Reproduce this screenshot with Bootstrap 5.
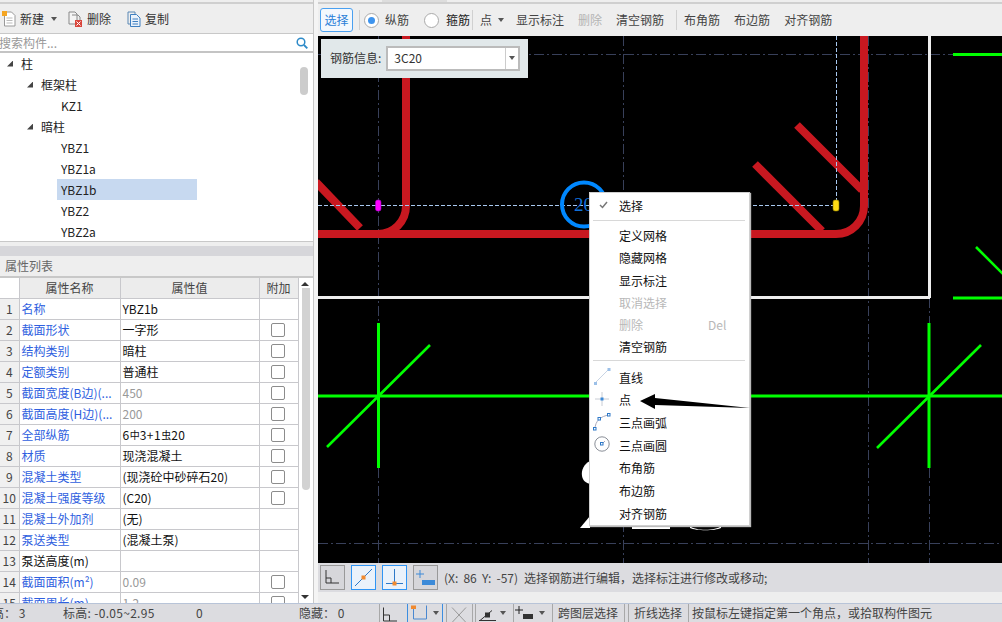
<!DOCTYPE html>
<html lang="zh">
<head>
<meta charset="utf-8">
<title>钢筋编辑</title>
<link href="https://cdn.jsdelivr.net/npm/bootstrap@5.3.0/dist/css/bootstrap.min.css" rel="stylesheet">
<style>
html,body{height:622px;overflow:hidden}
body{font-family:"Noto Sans CJK SC","Liberation Sans",sans-serif;font-size:12px;line-height:1;color:#222;background:#eee;position:relative;width:1002px}
.app-top{height:603px}
.side{width:318px;flex:none;background:#f4f4f4}
.side-in{width:314px;border-right:1px solid #c8c8c8;height:603px;background:#eee}
.strip{height:4px;border-bottom:2px solid #cfcfcf;background:#eee}
.tabmark{display:block;height:2px;width:65px;margin-left:64px;background:#ddd}
.ltool{height:30px;padding-left:2px;border-bottom:1px solid #c8c8c8;color:#333}
.ltool svg{flex:none}
.search-row{height:19px;background:#fff;border-bottom:2px solid #c4c4c4;color:#999;margin-left:0}
.search-txt{margin-left:-1px}
.tree{height:189px;background:#fff;border-bottom:1px solid #c8c8c8;position:relative;overflow:hidden}
.tree-row{height:21px;display:flex;align-items:center;color:#222}
.tree-row.sel{background:#c7d9f0;width:140px;margin-left:57px;padding-left:4px!important}
.lv1{padding-left:7px}.lv2{padding-left:27px}.lv3{padding-left:61px}
.tri{width:6px;height:6px;margin-right:8px;flex:none;background:#444;clip-path:polygon(100% 0,100% 100%,0 100%)}
.thumb-a{position:absolute;left:300px;top:14px;width:8px;height:28px;border-radius:4px;background:#ccc}
.g1{height:4px;background:#eee}
.g2{height:10px;background:#d6d6da}
.prop-head{height:22px;padding-left:5px;border-bottom:2px solid #c8c8c8;color:#666;background:#eee;font-size:12px}
.prop-wrap{height:325px;overflow:hidden;background:#fff;position:relative}
.ptab{width:298px;table-layout:fixed;border-collapse:collapse;margin:0;--bs-table-bg:transparent}
.ptab td,.ptab th{padding:0 0 0 2px;height:21px;border:1px solid #c8c8cc;font-weight:400;font-size:12px;white-space:nowrap;overflow:hidden;vertical-align:middle;color:#111}
.ptab tr:first-child th{height:20px;background:#ececec;text-align:center;padding:0;border-top:0;color:#444}
.ptab tr:first-child th:first-child{background:#fff;border:0;border-bottom:1px solid #c8c8cc}
.ptab .num{background:#f0f0f0;padding:0;text-align:center;color:#444;border-left:0;font-size:12px}
.ptab .nm{color:#2f5fe0}
.ptab .gry{color:#999}
.steel{letter-spacing:.5px}
.steel span{font-size:10px;position:relative;top:-1px;letter-spacing:0}
.tick{display:block;width:14px;height:14px;border:1px solid #8c8c8c;border-radius:2px;background:#fff;margin:0 0 0 11px}
.ptab .ck{padding:0}
.sb{position:absolute;left:299px;top:0;bottom:0;width:14px;background:#fff}
.sb-up,.sb-dn{position:absolute;left:2px;width:0;height:0;border-left:4px solid transparent;border-right:4px solid transparent}
.sb-up{top:4px;border-bottom:4px solid #333}
.sb-dn{top:317px;border-top:4px solid #333}
.sb-th{position:absolute;left:3px;top:10px;width:8px;height:202px;background:#d2d2d2;border-radius:0 0 4px 4px}
.main{flex:1;min-width:0;height:603px;background:#eee}
.rtool{height:32px;padding-left:2px;color:#444;background:#eee}
.btn-sel{width:33px;height:24px;border:1px solid #4aa0f0;border-radius:3px;background:#f4f8fd;color:#2a7fd8;padding:0;font-size:12px;margin-right:6px}
.vsep{width:1px;height:20px;background:#d0d0d0;flex:none}
.radio-dot{width:15px;height:15px;border-radius:50%;border:1px solid #aaa;background:#fff;flex:none;display:flex;align-items:center;justify-content:center}
.radio-dot i{display:block;width:7px;height:7px;border-radius:50%;background:#3e94ee}
.caret-d{width:0;height:0;border-left:3.5px solid transparent;border-right:3.5px solid transparent;border-top:4px solid #555;flex:none}
.dis{color:#b4b4b4}
.cv-wrap{height:527px;position:relative;background:#000;overflow:hidden}
.cv-wrap>svg{display:block}
.info-box{position:absolute;left:3px;top:3px;width:207px;height:39px;background:#e1e8ea;padding:0 0 1px 9px;color:#333}
.info-in{width:134px;height:25px;border:2px solid #bbb;background:#fff;margin-left:5px;padding-left:6px;position:relative}
.info-dd{position:absolute;right:0;top:0;bottom:0;width:13px;border-left:1px solid #ccc;background:#fff;display:flex;align-items:center;justify-content:center}
.bbar{height:29px;background:#dcdce0;padding-left:2px;color:#444}
.ib{width:25px;height:25px;border:1px solid #999;background:#d6d6da;flex:none;margin-right:6px;display:flex;align-items:center;justify-content:center}
.ib.on{border:1px solid #2f95f5;background:#eaf2fb}
.coord{word-spacing:2.5px;margin-right:6px}
.bspace{height:11px;background:#eee}
.status{height:19px;background:#dcdce0;border-top:1px solid #b8c4d8;color:#444;position:relative;white-space:nowrap}
.sl{position:absolute;top:0;height:18px;display:flex;align-items:center}
.wide{letter-spacing:.3px}
.ssep{position:absolute;top:0;width:1px;height:18px;background:#a8a8a8}
.ssep.blue{background:#3c8ee0}
.ctx{position:absolute;left:589px;top:192px;width:161px;height:334px;background:#fff;border:1px solid #d0d0d0;box-shadow:1px 1px 1px #bbb;padding-top:2px;color:#111}
.ctx-i{height:22.2px;padding-left:29px;display:flex;align-items:center;position:relative}
.ctx-i.b{height:22.7px}
.ctx-i .mi{position:absolute;left:3px;top:1px}
.ctx-d{color:#b8b8b8}
.ctx-sep{height:1px;background:#d8d8d8;margin:3px 4px 4px 3px}
.ctx-sep.s2{margin:2px 4px 5px 3px}
.ctx-key{position:absolute;left:118px;color:#b8b8b8}
.chk{position:absolute;left:9px;top:6px}
.arrow-ov{position:absolute;left:630px;top:385px}
</style>
</head>
<body>
<div class="d-flex app-top">
  <div class="side">
    <div class="side-in d-flex flex-column">
      <div class="strip"></div>
      <div class="ltool d-flex align-items-center">
        <svg width="14" height="16" viewBox="0 0 14 16"><path d="M2.500 1h7l3.500 3.500V15h-10.500z" fill="#fff" stroke="#999"/><path d="M4.500 7h6M4.500 9.500h6M4.500 12h6" stroke="#bbb"/><rect x="0" y="0" width="5" height="5" fill="#f5a623"/></svg>
        <span style="margin-left:4px">新建</span>
        <span class="caret-d" style="margin-left:7px"></span>
        <svg style="margin-left:11px" width="15" height="16" viewBox="0 0 15 16"><path d="M1 1h6l2 2v10H1z" fill="#f4f4f4" stroke="#888"/><path d="M4 4h6l2 2v4" fill="none" stroke="#888"/><rect x="7" y="9" width="7" height="7" fill="#d9453b"/><path d="M8.500 10.500l4 4m0-4l-4 4" stroke="#fff"/></svg>
        <span style="margin-left:4px">删除</span>
        <svg style="margin-left:16px" width="14" height="16" viewBox="0 0 14 16"><path d="M1 1h7v2M1 1v12h2" fill="none" stroke="#5b88b5"/><path d="M3.500 3.500h6l3.500 3.500v8.500H3.500z" fill="#eaf2fb" stroke="#3f7fc0"/><path d="M5.500 8h5.500M5.500 10.500h5.500M5.500 13h5.500" stroke="#3f7fc0"/></svg>
        <span style="margin-left:4px">复制</span>
      </div>
      <div class="search-row d-flex align-items-center justify-content-between">
        <span class="search-txt">搜索构件...</span>
        <svg style="margin-right:5px" width="12" height="12" viewBox="0 0 12 12"><circle cx="5" cy="5" r="3.800" fill="none" stroke="#2d8ac8" stroke-width="1.500"/><path d="M8 8l3.300 3.300" stroke="#2d8ac8" stroke-width="1.800"/></svg>
      </div>
      <div class="tree">
        <div class="tree-row lv1"><span class="tri"></span>柱</div>
        <div class="tree-row lv2"><span class="tri"></span>框架柱</div>
        <div class="tree-row lv3">KZ1</div>
        <div class="tree-row lv2"><span class="tri"></span>暗柱</div>
        <div class="tree-row lv3">YBZ1</div>
        <div class="tree-row lv3">YBZ1a</div>
        <div class="tree-row sel">YBZ1b</div>
        <div class="tree-row lv3">YBZ2</div>
        <div class="tree-row lv3">YBZ2a</div>
        <div class="thumb-a"></div>
      </div>
      <div class="g1"></div>
      <div class="g2"></div>
      <div class="prop-head d-flex align-items-center">属性列表</div>
      <div class="prop-wrap">
        <table class="table ptab">
          <colgroup><col style="width:19px"><col style="width:101px"><col style="width:139px"><col style="width:39px"></colgroup>
          <tr><th></th><th>属性名称</th><th>属性值</th><th>附加</th></tr>
          <tr><td class="num">1</td><td class="nm">名称</td><td>YBZ1b</td><td></td></tr>
          <tr><td class="num">2</td><td class="nm">截面形状</td><td>一字形</td><td class="ck"><span class="tick"></span></td></tr>
          <tr><td class="num">3</td><td class="nm">结构类别</td><td>暗柱</td><td class="ck"><span class="tick"></span></td></tr>
          <tr><td class="num">4</td><td class="nm">定额类别</td><td>普通柱</td><td class="ck"><span class="tick"></span></td></tr>
          <tr><td class="num">5</td><td class="nm">截面宽度(B边)(...</td><td class="gry">450</td><td class="ck"><span class="tick"></span></td></tr>
          <tr><td class="num">6</td><td class="nm">截面高度(H边)(...</td><td class="gry">200</td><td class="ck"><span class="tick"></span></td></tr>
          <tr><td class="num">7</td><td class="nm">全部纵筋</td><td class="steel">6<span>中</span>3+1<span>虫</span>20</td><td class="ck"><span class="tick"></span></td></tr>
          <tr><td class="num">8</td><td class="nm">材质</td><td>现浇混凝土</td><td class="ck"><span class="tick"></span></td></tr>
          <tr><td class="num">9</td><td class="nm">混凝土类型</td><td>(现浇砼中砂碎石20)</td><td class="ck"><span class="tick"></span></td></tr>
          <tr><td class="num">10</td><td class="nm">混凝土强度等级</td><td>(C20)</td><td class="ck"><span class="tick"></span></td></tr>
          <tr><td class="num">11</td><td class="nm">混凝土外加剂</td><td>(无)</td><td></td></tr>
          <tr><td class="num">12</td><td class="nm">泵送类型</td><td>(混凝土泵)</td><td></td></tr>
          <tr><td class="num">13</td><td>泵送高度(m)</td><td></td><td></td></tr>
          <tr><td class="num">14</td><td class="nm">截面面积(m²)</td><td class="gry">0.09</td><td class="ck"><span class="tick"></span></td></tr>
          <tr><td class="num">15</td><td class="nm">截面周长(m)</td><td class="gry">1.2</td><td class="ck"><span class="tick"></span></td></tr>
        </table>
        <div class="sb"><span class="sb-up"></span><span class="sb-th"></span><span class="sb-dn"></span></div>
      </div>
    </div>
  </div>
  <div class="main d-flex flex-column">
    <div class="strip"><span class="tabmark"></span></div>
    <div class="rtool d-flex align-items-center">
      <button type="button" class="btn btn-sel">选择</button>
      <span class="vsep"></span>
      <span class="radio-dot" style="margin-left:4px"><i></i></span>
      <span style="margin-left:6px">纵筋</span>
      <span class="radio-dot" style="margin-left:15px"></span>
      <span style="margin-left:7px;color:#222">箍筋</span>
      <span class="vsep" style="margin-left:2px"></span>
      <span style="margin-left:7px">点</span>
      <span class="caret-d" style="margin-left:6px"></span>
      <span style="margin-left:12px">显示标注</span>
      <span class="dis" style="margin-left:14px">删除</span>
      <span style="margin-left:14px">清空钢筋</span>
      <span class="vsep" style="margin-left:12px"></span>
      <span style="margin-left:7px">布角筋</span>
      <span style="margin-left:14px">布边筋</span>
      <span style="margin-left:14px">对齐钢筋</span>
    </div>
    <div class="cv-wrap">
      <svg width="684" height="527" viewBox="318 36 684 527" fill="none">
        <g stroke="#38405a" stroke-width="1" stroke-dasharray="10 3 2 3">
          <path d="M378.500 36V563M623.500 36V563M868.500 36V563M318 54.500H953M318 543.500H1002M929.500 298V323M929.500 468V563M378.500 468V563"/>
        </g>
        <path d="M318 297.500H930M929.500 36V298" stroke="#eee" stroke-width="3"/>
        <path d="M406 36V206A28 28 0 0 1 378 234H318M378 234H836A28 28 0 0 0 864 206V36" stroke="#c81820" stroke-width="8"/>
        <path d="M316 182L360 228M797 125L862 190M755 164L822 231" stroke="#c81820" stroke-width="8"/>
        <path d="M318 205.500H376M381 205.500H834M836.500 36V203" stroke="#a8c8f0" stroke-width="1" stroke-dasharray="4 2"/>
        <circle cx="584" cy="204.500" r="22" stroke="#0088ff" stroke-width="4"/>
        <text x="574" y="211" fill="#1070d8" font-family="Liberation Serif" font-size="19">20</text>
        <rect x="375.500" y="200" width="5.500" height="11" rx="2" fill="#ff00ff" stroke="#a000c0" stroke-width=".6"/>
        <rect x="833" y="200" width="6" height="11" rx="2" fill="#ffdc14" stroke="#8a7a00" stroke-width=".6"/>
        <g stroke="#0f0" stroke-width="3">
          <path d="M318 396H1002M953 54.500H1002M953 298H1002"/>
          <path d="M378.500 323V468M929 323V468"/>
        </g>
        <g stroke="#0f0" stroke-width="2.600">
          <path d="M327 447L430 345M877 448L981 345M976 247L1004 275"/>
        </g>
        <g fill="#fff">
          <path d="M590 461C584 464 581 470 582 476C583 481 586 483 590 484Z"/>
          <path d="M590 516L580 528H590Z"/>
          <path d="M632 526H670V529H632Z"/>
          <path d="M690 526C695 531 716 531 721 526V528C715 531 696 531 690 528Z"/>
        </g>
      </svg>
      <div class="info-box d-flex align-items-center">
        <span>钢筋信息:</span>
        <div class="info-in d-flex align-items-center">3C20<span class="info-dd"><span class="caret-d"></span></span></div>
      </div>
    </div>
    <div class="bbar d-flex align-items-center">
      <span class="ib"><svg width="17" height="17" viewBox="0 0 17 17" fill="none"><path d="M2 1V14H15M2 9H7V14" stroke="#333"/></svg></span>
      <span class="ib on"><svg width="21" height="21" viewBox="0 0 21 21" fill="none"><path d="M2 19L19 2" stroke="#2e79c8"/><rect x="8.500" y="8.500" width="4" height="4" fill="#f08a30"/></svg></span>
      <span class="ib on"><svg width="21" height="21" viewBox="0 0 21 21" fill="none"><path d="M10.500 2V16M2 16.500H19" stroke="#2e79c8"/><rect x="8.500" y="14.500" width="4" height="4" fill="#f08a30"/></svg></span>
      <span class="ib"><svg width="21" height="21" viewBox="0 0 21 21" fill="none"><path d="M5 3V11M1 7H9" stroke="#3c8ad8"/><rect x="7" y="13" width="13" height="5" fill="#3c8ad8"/></svg></span>
      <span class="coord">(X: 86 Y: -57)</span>
      <span>选择钢筋进行编辑，选择标注进行修改或移动;</span>
    </div>
    <div class="bspace"></div>
  </div>
</div>
<div class="status">
  <span class="sl" style="left:-8px">高：&nbsp;3</span>
  <span class="sl wide" style="left:63px">标高: -0.05~2.95</span>
  <span class="sl" style="left:196px">0</span>
  <span class="sl" style="left:299px">隐藏：&nbsp;0</span>
  <span class="ssep" style="left:379px"></span>
  <svg class="sl" style="left:382px;top:2px" width="16" height="15" viewBox="0 0 16 15" fill="none"><path d="M1.500 0V13.500H15M1.500 7.500H7.500V13.500" stroke="#333"/></svg>
  <span class="ssep blue" style="left:407px"></span>
  <span class="ssep blue" style="left:442px"></span>
  <svg class="sl" style="left:411px;top:0" width="16" height="15" viewBox="0 0 16 15" fill="none"><path d="M2.500 2V13.500H15.500V0" stroke="#4a88d0"/><rect x="0" y="0" width="5" height="3.500" fill="#f08a30"/></svg>
  <span class="sl" style="left:433px"><span class="caret-d"></span></span>
  <span class="ssep" style="left:446px"></span>
  <svg class="sl" style="left:451px;top:2px" width="16" height="15" viewBox="0 0 16 15" fill="none"><path d="M1 0L15 15M15 0L1 15" stroke="#999"/></svg>
  <span class="ssep" style="left:472px"></span>
  <span class="ssep" style="left:475px"></span>
  <svg class="sl" style="left:478px;top:1px" width="19" height="15" viewBox="0 0 19 15" fill="none"><path d="M1 14H18M2 14L14 4" stroke="#333"/><rect x="7" y="6" width="5" height="5" fill="#333"/></svg>
  <span class="sl" style="left:500px"><span class="caret-d"></span></span>
  <span class="ssep" style="left:513px"></span>
  <svg class="sl" style="left:514px;top:0" width="20" height="16" viewBox="0 0 20 16" fill="none"><path d="M5 1V9M1 5H9" stroke="#222"/><rect x="9" y="9" width="10" height="5" fill="#333"/></svg>
  <span class="sl" style="left:539px"><span class="caret-d"></span></span>
  <span class="ssep" style="left:552px"></span>
  <span class="sl" style="left:558px">跨图层选择</span>
  <span class="ssep" style="left:624px"></span>
  <span class="ssep" style="left:628px"></span>
  <span class="sl" style="left:634px">折线选择</span>
  <span class="ssep" style="left:688px"></span>
  <span class="sl" style="left:692px">按鼠标左键指定第一个角点，或拾取构件图元</span>
</div>

<div class="ctx">
  <div class="ctx-i"><svg class="chk" width="9" height="8" viewBox="0 0 9 8" fill="none"><path d="M1 4L3.500 6.500L8 1" stroke="#777" stroke-width="1.500"/></svg>选择</div>
  <div class="ctx-sep"></div>
  <div class="ctx-i">定义网格</div>
  <div class="ctx-i">隐藏网格</div>
  <div class="ctx-i">显示标注</div>
  <div class="ctx-i ctx-d">取消选择</div>
  <div class="ctx-i ctx-d">删除<span class="ctx-key">Del</span></div>
  <div class="ctx-i">清空钢筋</div>
  <div class="ctx-sep s2"></div>
  <div class="ctx-i b"><svg class="mi" width="18" height="18" viewBox="0 0 18 18" fill="none"><path d="M2 16L16 2" stroke="#c8d4e4"/><rect x="1" y="15" width="3" height="3" fill="#9cc0e8"/><rect x="14.500" y="1" width="3" height="3" fill="#9cc0e8"/></svg>直线</div>
  <div class="ctx-i b"><svg class="mi" width="18" height="18" viewBox="0 0 18 18" fill="none"><path d="M9 2V16M2 9H16" stroke="#c8ccd4"/><rect x="7.500" y="7.500" width="3" height="3" fill="#3c8ad8"/></svg>点</div>
  <div class="ctx-i b"><svg class="mi" width="18" height="18" viewBox="0 0 18 18" fill="none"><path d="M2 16C2 8 8 3 16 2" stroke="#aab"/><rect x=".5" y="14.500" width="2.500" height="2.500" fill="#fff" stroke="#2e79c8"/><rect x="5" y="4.500" width="2.500" height="2.500" fill="#fff" stroke="#2e79c8"/><rect x="14.500" y=".5" width="2.500" height="2.500" fill="#fff" stroke="#2e79c8"/></svg>三点画弧</div>
  <div class="ctx-i b"><svg class="mi" width="18" height="18" viewBox="0 0 18 18" fill="none"><circle cx="9" cy="9" r="7.200" stroke="#8a8f98"/><path d="M9 9L12 6" stroke="#aab"/><rect x="7.500" y="7.500" width="2.500" height="2.500" fill="#fff" stroke="#2e79c8"/></svg>三点画圆</div>
  <div class="ctx-i b">布角筋</div>
  <div class="ctx-i b">布边筋</div>
  <div class="ctx-i b">对齐钢筋</div>
</div>
<svg class="arrow-ov" width="125" height="30" viewBox="630 385 125 30"><polygon points="640,401 655,394 655,398 750,408 655,405 655,409" fill="#000"/></svg>
</body>
</html>
